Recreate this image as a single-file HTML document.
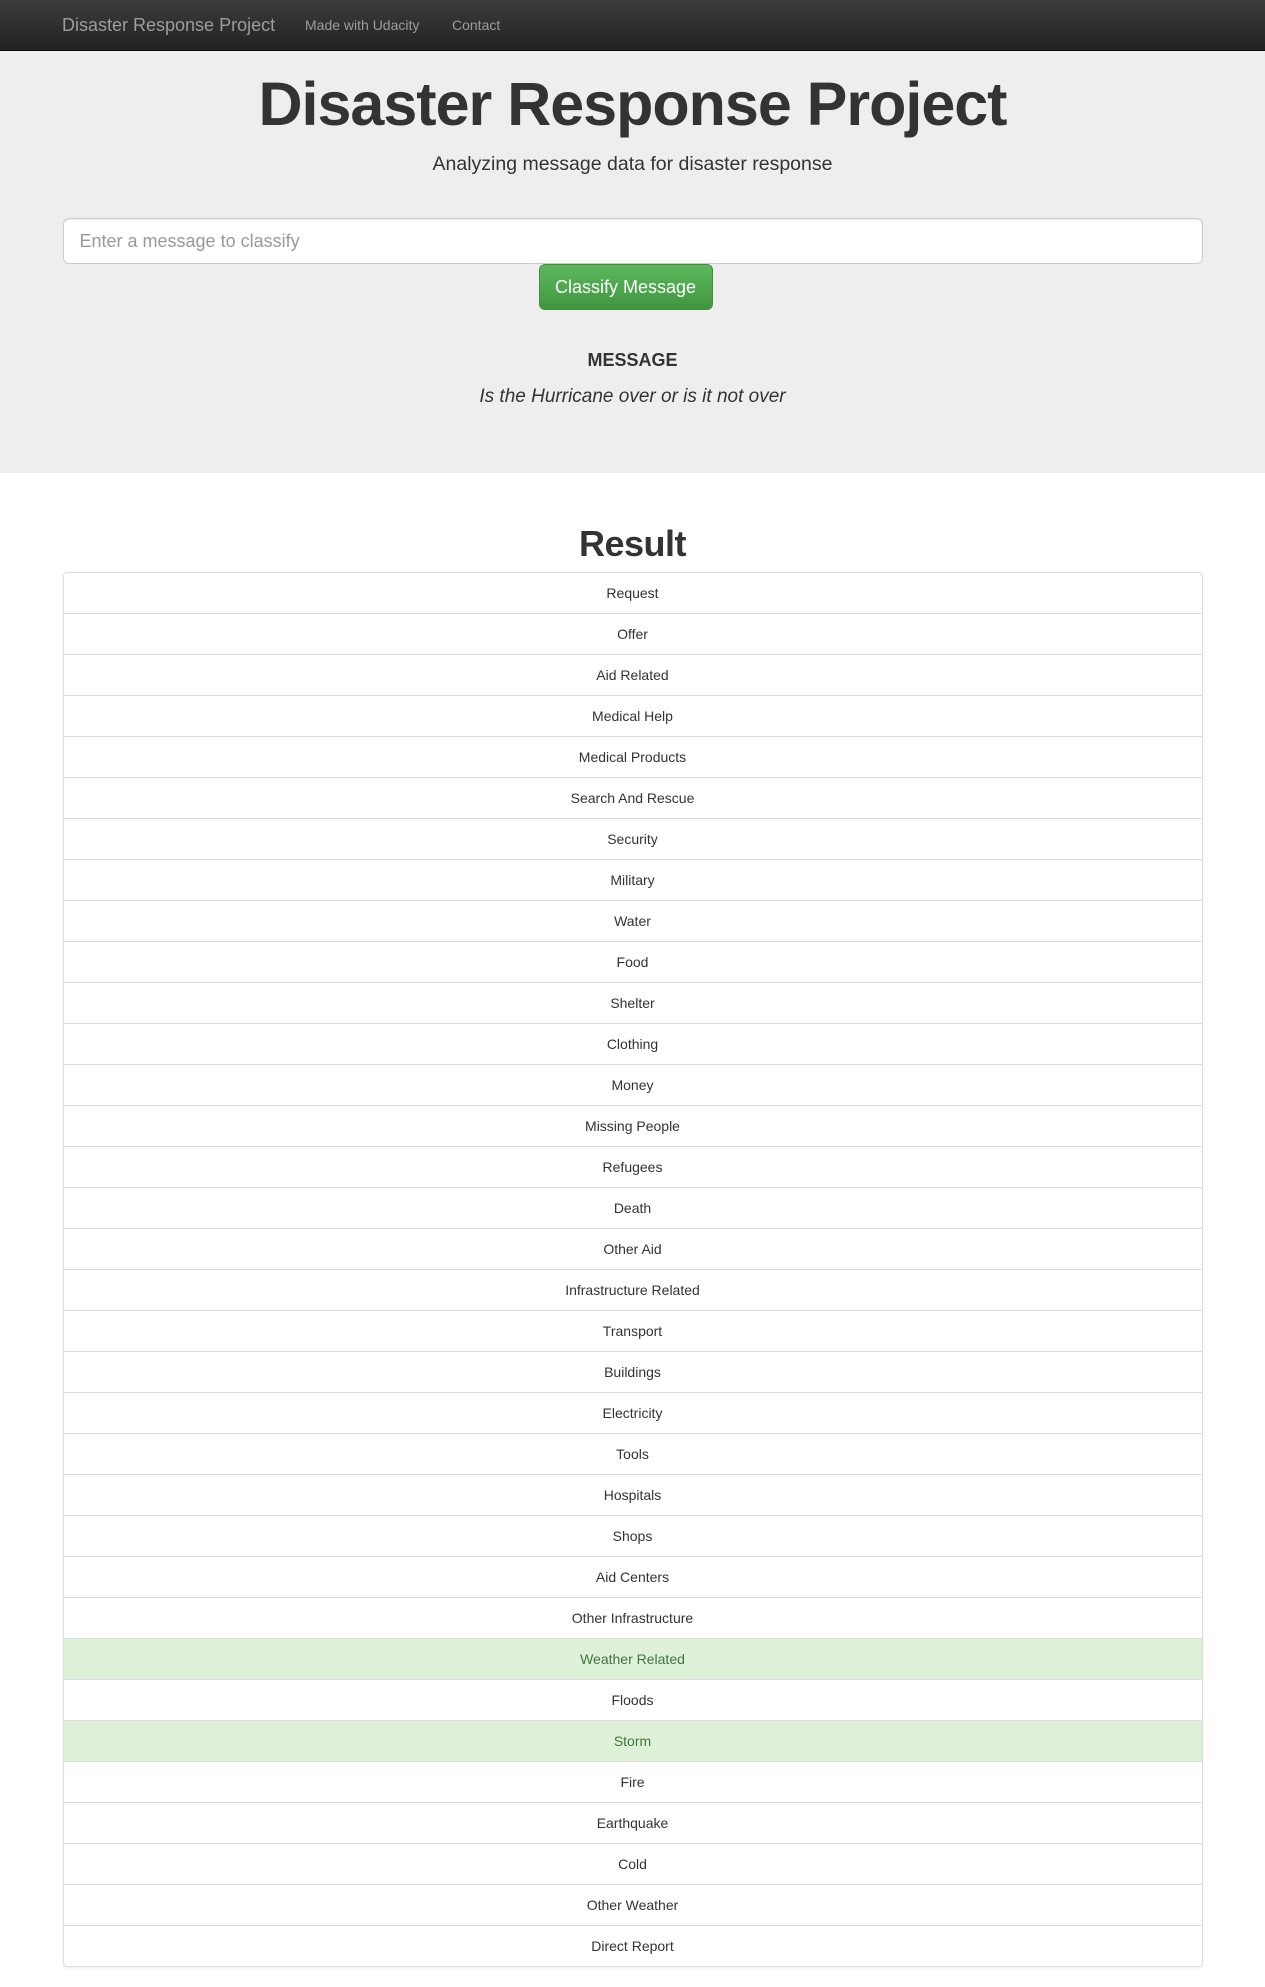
<!DOCTYPE html>
<html><head><meta charset="utf-8"><style>
*{box-sizing:border-box}
body{margin:0;font-family:"Liberation Sans",Arial,sans-serif;font-size:14px;color:#333;background:#fff;line-height:1.42857}
.nav{height:51px;background:linear-gradient(#3c3c3c,#222);border-bottom:1px solid #080808;position:relative}
.nav span{position:absolute;top:0;line-height:50px;color:#9d9d9d}
.brand{left:62px;font-size:18px}
.jumbo{background:#eee;height:422px;text-align:center;position:relative}
.c{width:1140px;margin:0 auto;position:relative}
h1.t{margin:0;position:absolute;top:15px;left:0;right:0;font-size:61px;font-weight:bold;letter-spacing:-1px;line-height:76px}
.sub{position:absolute;top:98px;left:0;right:0;font-size:19.5px;font-weight:300;margin:0;line-height:30px}
.inp{position:absolute;top:167px;left:0;width:1140px;height:46px;border:1px solid #ccc;border-radius:6px;background:#fff;text-align:left;padding:0 16px;line-height:44px;font-size:18px;color:#999;box-shadow:inset 0 1px 1px rgba(0,0,0,.075)}
.btn{position:absolute;top:213px;left:476px;width:174px;height:46px;border-radius:6px;background:linear-gradient(#5cb85c,#419641);border:1px solid #3e8f3e;color:#fff;font-size:18px;line-height:44px}
.m{position:absolute;top:297px;left:0;right:0;font-size:18px;font-weight:bold;margin:0}
.msg{position:absolute;top:332px;left:0;right:0;font-size:19px;font-style:italic;font-weight:300}
h1.r{text-align:center;font-size:36px;font-weight:bold;letter-spacing:-0.5px;margin:0;padding-top:50px;line-height:42px}
.list{margin-top:7px;border:1px solid #ddd;border-radius:4px;box-shadow:0 1px 2px rgba(0,0,0,.075)}
.list div{height:41px;line-height:40px;text-align:center;border-top:1px solid #ddd}
.list div:first-child{border-top:0;height:40px}
.list .s{background:#dff0d8;color:#3c763d}
</style></head><body>
<div class="nav"><span class="brand">Disaster Response Project</span><span style="left:305px">Made with Udacity</span><span style="left:452px">Contact</span></div>
<div class="jumbo"><div class="c">
<h1 class="t">Disaster Response Project</h1>
<p class="sub">Analyzing message data for disaster response</p>
<div class="inp">Enter a message to classify</div>
<div class="btn">Classify Message</div>
<h4 class="m">MESSAGE</h4>
<div class="msg">Is the Hurricane over or is it not over</div>
</div></div>
<div class="c">
<h1 class="r">Result</h1>
<div class="list">
<div>Request</div><div>Offer</div><div>Aid Related</div><div>Medical Help</div><div>Medical Products</div><div>Search And Rescue</div><div>Security</div><div>Military</div><div>Water</div><div>Food</div><div>Shelter</div><div>Clothing</div><div>Money</div><div>Missing People</div><div>Refugees</div><div>Death</div><div>Other Aid</div><div>Infrastructure Related</div><div>Transport</div><div>Buildings</div><div>Electricity</div><div>Tools</div><div>Hospitals</div><div>Shops</div><div>Aid Centers</div><div>Other Infrastructure</div><div class="s">Weather Related</div><div>Floods</div><div class="s">Storm</div><div>Fire</div><div>Earthquake</div><div>Cold</div><div>Other Weather</div><div>Direct Report</div>
</div></div>
</body></html>
